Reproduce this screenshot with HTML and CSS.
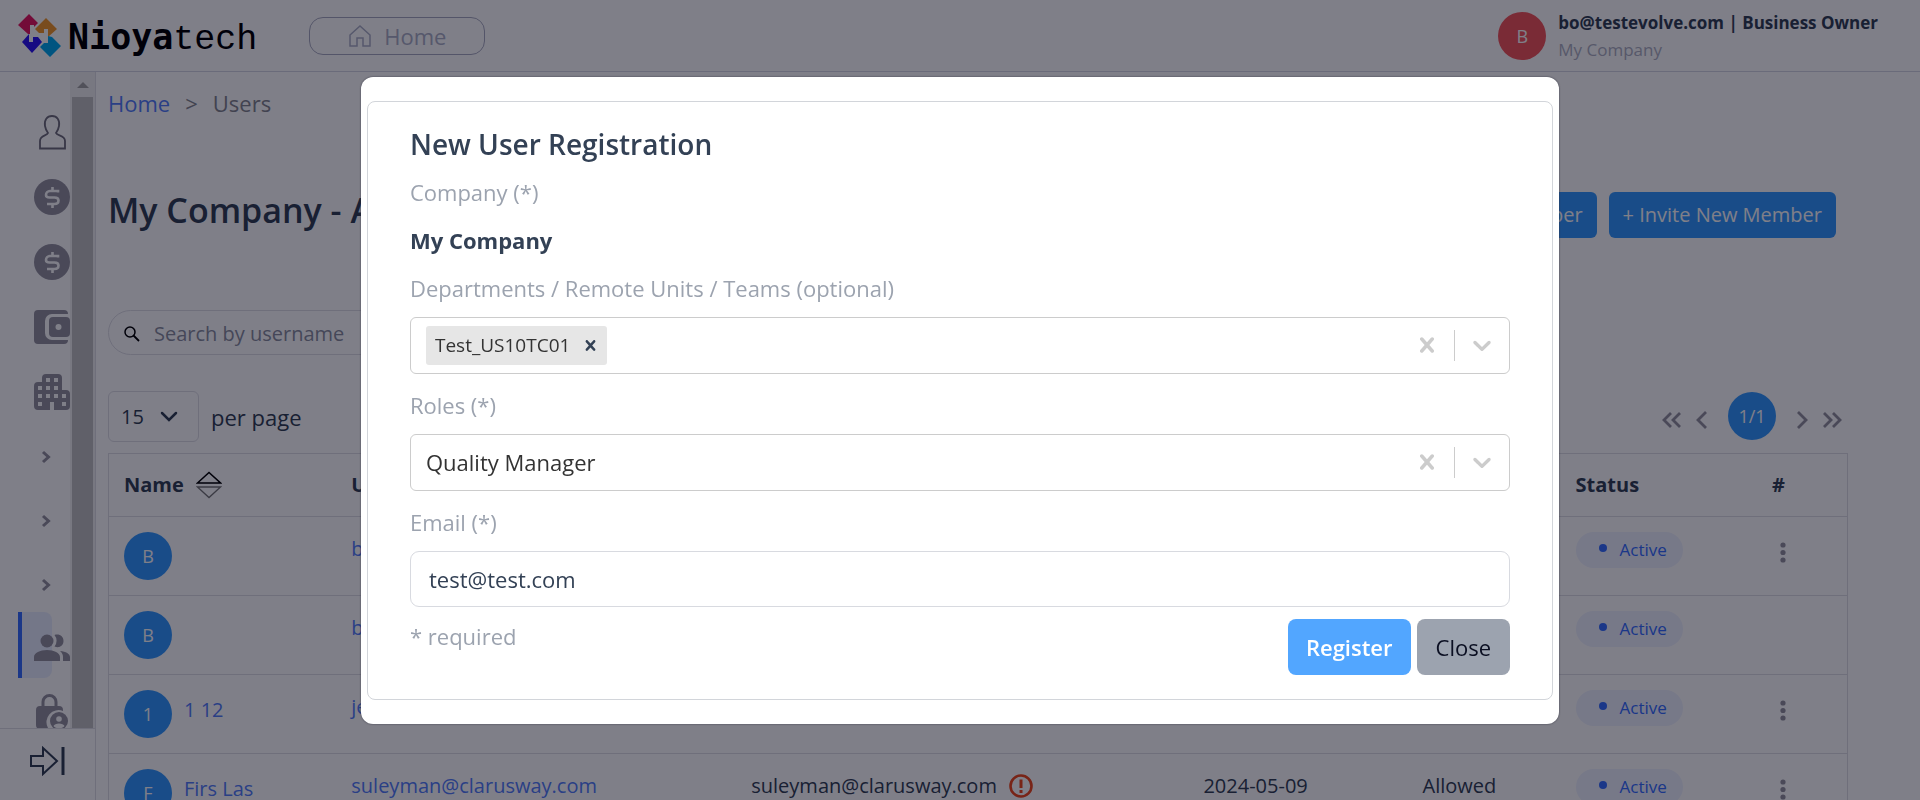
FILE: index.html
```html
<!DOCTYPE html>
<html lang="en">
<head>
<meta charset="utf-8">
<title>Nioyatech - Users</title>
<link rel="stylesheet" href="styles.css">
</head>
<body>
<svg width="0" height="0" class="sprite" aria-hidden="true">
  <symbol id="dollar" viewBox="0 0 36 36"><circle cx="18" cy="18" r="18" fill="currentColor"/><path d="M24 13.500V12H16a4 4 0 0 0-4 4c0 1.500 1.500 2.500 3.500 2.500h5c2.500 0 4 1 4 3S23 25 20.500 25H13M18.500 8v4M18.500 25v4" fill="none" stroke="#fff" stroke-width="2.600"/></symbol>
  <symbol id="chev-right" viewBox="0 0 10 14"><path d="M2 2l5.500 5L2 12" fill="none" stroke="currentColor" stroke-width="3"/></symbol>
  <symbol id="cross" viewBox="0 0 20 20"><path d="M14.348 14.849c-.469.469-1.229.469-1.697 0l-2.651-3.030-2.651 3.029c-.469.469-1.229.469-1.697 0-.469-.469-.469-1.229 0-1.697l2.758-3.150-2.759-3.152c-.469-.469-.469-1.228 0-1.697s1.228-.469 1.697 0l2.652 3.031 2.651-3.031c.469-.469 1.228-.469 1.697 0s.469 1.229 0 1.697l-2.758 3.152 2.758 3.150c.469.469.469 1.229 0 1.698z" fill="currentColor"/></symbol>
  <symbol id="chev-down" viewBox="0 0 20 20"><path d="M4.516 7.548c.436-.446 1.043-.481 1.576 0L10 11.295l3.908-3.747c.533-.481 1.141-.446 1.574 0 .436.445.408 1.197 0 1.615l-4.695 4.502a1.095 1.095 0 0 1-1.576 0S4.924 9.581 4.516 9.163c-.409-.418-.436-1.170 0-1.615z" fill="currentColor"/></symbol>
  <symbol id="dots" viewBox="0 0 6 22"><circle cx="3" cy="3" r="2.600" fill="currentColor"/><circle cx="3" cy="10.500" r="2.600" fill="currentColor"/><circle cx="3" cy="18" r="2.600" fill="currentColor"/></symbol>
</svg>

<div class="app">
  <header class="topbar">
    <a class="brand" href="#" aria-label="Nioyatech">
      <svg width="44" height="44" viewBox="0 0 44 44">
        <path d="M11 0l9 9-4 4v-2h-4v9h-2L0 11z" fill="#e6185f"/>
        <path d="M28 4l11 11-9 8v-8h-4v4h-5l-4-4z" fill="#f3982b"/>
        <path d="M4 28l7-8v8h4v-5l5 0 4 5-10 11z" fill="#2d16f2"/>
        <path d="M43 32L32 43 22 33l4-4h4v-7l4 1z" fill="#00a9ee"/>
      </svg>
      <span class="brand-text"><b>Nioya</b>tech</span>
    </a>
    <a class="home-btn" href="#">
      <svg width="24" height="24" viewBox="0 0 24 24"><path d="M2 11L12 2l10 9v11h-7v-8H9v8H2z" fill="none" stroke="currentColor" stroke-width="1.500"/></svg>
      Home
    </a>
    <div class="account">
      <span class="avatar avatar-red">B</span>
      <div class="account-text">
        <strong>bo@testevolve.com | Business Owner</strong>
        <span>My Company</span>
      </div>
    </div>
  </header>

  <div class="body">
    <aside class="sidebar">
      <div class="side-scroll">
        <nav class="side-nav">
          <a class="side-item" href="#" aria-label="Profile"><svg class="profile" width="36" height="36" viewBox="0 0 36 36"><path d="M18 2c5 0 8 4 7 10-.5 3-1.500 5-3 7 1 3 9 2 9 8v7.500H6V27c0-6 7-5 8-8-1.500-2-2.500-4-3-7-1-6 2-10 7-10z" fill="none" stroke="currentColor" stroke-width="1.800"/></svg></a>
          <a class="side-item" href="#" aria-label="Billing"><svg width="36" height="36"><use href="#dollar"/></svg></a>
          <a class="side-item" href="#" aria-label="Payments"><svg width="36" height="36"><use href="#dollar"/></svg></a>
          <a class="side-item" href="#" aria-label="Wallet"><svg width="36" height="36" viewBox="0 0 36 36"><path d="M4 1h26a4 4 0 0 1 4 4H18a7 7 0 0 0-7 7v12a7 7 0 0 0 7 7h16a4 4 0 0 1-4 4H4a4 4 0 0 1-4-4V5a4 4 0 0 1 4-4z" fill="currentColor"/><rect x="15" y="8" width="21" height="20" rx="4" fill="currentColor"/><circle cx="24.500" cy="18" r="3" fill="#fff"/></svg></a>
          <a class="side-item" href="#" aria-label="Company"><svg width="36" height="36" viewBox="0 0 36 36"><path fill-rule="evenodd" fill="currentColor" d="M12 0h12a4 4 0 0 1 4 4v12h4a4 4 0 0 1 4 4v12a4 4 0 0 1-4 4H20v-8h-4v8H4a4 4 0 0 1-4-4V12a4 4 0 0 1 4-4h4V4a4 4 0 0 1 4-4zM12 4v4h4V4zM20 4v4h4V4zM4 12v4h4v-4zM12 12v4h4v-4zM20 12v4h4v-4zM4 20v4h4v-4zM12 20v4h4v-4zM20 20v4h4v-4zM28 20v4h4v-4zM4 28v4h4v-4zM28 28v4h4v-4z"/></svg></a>
          <a class="side-item side-more" href="#" aria-label="Expand"><svg width="10" height="14"><use href="#chev-right"/></svg></a>
          <a class="side-item side-more" href="#" aria-label="Expand"><svg width="10" height="14"><use href="#chev-right"/></svg></a>
          <a class="side-item side-more" href="#" aria-label="Expand"><svg width="10" height="14"><use href="#chev-right"/></svg></a>
          <a class="side-item side-active" href="#" aria-label="Users"><svg width="36" height="28" viewBox="0 0 36 28"><g fill="currentColor"><circle cx="13" cy="7" r="6.500"/><path d="M0 27v-4c0-4 6-7 13-7s13 3 13 7v4zM29 27v-4c0-2.500-1-4.500-3-6 6 .5 10 3 10 6v4zM20.500 12.500a9 9 0 0 0 0-11.500c5-1.500 9 1.500 9 6s-4 7.500-9 5.500z"/></g></svg></a>
          <a class="side-item side-lock" href="#" aria-label="Permissions"><svg width="36" height="36" viewBox="0 0 36 36"><path d="M9 13V8a6.500 6.500 0 0 1 13 0v5" fill="none" stroke="currentColor" stroke-width="3"/><path d="M6 12h19a4 4 0 0 1 4 4v1a12 12 0 0 0-15 17v1H6a4 4 0 0 1-4-4V16a4 4 0 0 1 4-4z" fill="currentColor"/><circle cx="25" cy="27" r="9" fill="currentColor"/><circle cx="25" cy="25" r="2.800" fill="#fff"/><path d="M19.500 32c1-3.500 10-3.500 11 0-2 3-9 3-11 0z" fill="#fff"/></svg></a>
        </nav>
        <div class="scrollbar"><span class="scroll-up"></span><span class="scroll-thumb"></span></div>
      </div>
      <button class="side-toggle" type="button" aria-label="Expand sidebar"><svg width="36" height="30" viewBox="0 0 36 30"><path d="M1 10h12V2l14 13-14 13v-8H1z" fill="none" stroke="currentColor" stroke-width="2"/><path d="M33 1v28" stroke="currentColor" stroke-width="3"/></svg></button>
    </aside>

    <main class="content">
      <nav class="crumbs"><a href="#">Home</a><span class="crumb-sep">&gt;</span><span>Users</span></nav>
      <div class="title-row">
        <h1>My Company - All Users</h1>
        <div class="actions">
          <button type="button">+ Add New Member</button>
          <button type="button">+ Invite New Member</button>
        </div>
      </div>
      <label class="search">
        <svg width="16" height="16" viewBox="0 0 16 16"><circle cx="6" cy="6" r="5" fill="none" stroke="#000" stroke-width="1.500"/><path d="M9.500 9.500L15 15" stroke="#000" stroke-width="1.800"/></svg>
        <input type="text" placeholder="Search by username" aria-label="Search by username">
      </label>
      <div class="pager-row">
        <div class="per-page">
          <div class="size-box">
            <select id="page-size"><option>15</option></select>
            <svg width="18" height="12" viewBox="0 0 18 12"><path d="M2 2l7 7 7-7" fill="none" stroke="currentColor" stroke-width="2.500" stroke-linecap="round"/></svg>
          </div>
          <label for="page-size">per page</label>
        </div>
        <div class="pager">
          <button type="button" aria-label="First page"><svg width="20" height="18" viewBox="0 0 20 18"><path d="M9 2L2 9l7 7M18 2l-7 7 7 7" fill="none" stroke="currentColor" stroke-width="2.800"/></svg></button>
          <button type="button" aria-label="Previous page"><svg width="12" height="18" viewBox="0 0 12 18"><path d="M10 1L2 9l8 8" fill="none" stroke="currentColor" stroke-width="2.800"/></svg></button>
          <span class="avatar page-now">1/1</span>
          <button type="button" aria-label="Next page"><svg width="12" height="18" viewBox="0 0 12 18"><path d="M2 1l8 8-8 8" fill="none" stroke="currentColor" stroke-width="2.800"/></svg></button>
          <button type="button" aria-label="Last page"><svg width="20" height="18" viewBox="0 0 20 18"><path d="M2 2l7 7-7 7M11 2l7 7-7 7" fill="none" stroke="currentColor" stroke-width="2.800"/></svg></button>
        </div>
      </div>
      <table class="users">
        <colgroup><col class="c-name"><col class="c-user"><col class="c-mail"><col class="c-date"><col class="c-login"><col class="c-status"><col class="c-menu"></colgroup>
        <thead>
          <tr>
            <th><span class="sort">Name <svg width="26" height="28" viewBox="0 0 26 28"><path d="M1.500 12L13 1.500 24.500 12z" fill="none" stroke="#000" stroke-width="1.500"/><path d="M1.500 16L13 26.500 24.500 16z" fill="none" stroke="#777" stroke-width="1.300"/></svg></span></th>
            <th>Username</th><th></th><th></th><th></th><th>Status</th><th>#</th>
          </tr>
        </thead>
        <tbody>
          <tr>
            <td><span class="person"><span class="avatar">B</span></span></td>
            <td><a href="#">bo@testevolve.com</a></td><td></td><td></td><td></td>
            <td><span class="pill">Active</span></td>
            <td><button class="row-menu" type="button" aria-label="Row menu"><svg width="6" height="22"><use href="#dots"/></svg></button></td>
          </tr>
          <tr>
            <td><span class="person"><span class="avatar">B</span></span></td>
            <td><a href="#">bo@test.com</a></td><td></td><td></td><td></td>
            <td><span class="pill">Active</span></td>
            <td></td>
          </tr>
          <tr>
            <td><span class="person"><span class="avatar">1</span><a href="#">1 12</a></span></td>
            <td><a href="#">je@test.com</a></td><td></td><td></td><td></td>
            <td><span class="pill">Active</span></td>
            <td><button class="row-menu" type="button" aria-label="Row menu"><svg width="6" height="22"><use href="#dots"/></svg></button></td>
          </tr>
          <tr>
            <td><span class="person"><span class="avatar">F</span><a href="#">Firs Las</a></span></td>
            <td><a href="#">suleyman@clarusway.com</a></td>
            <td><span class="mail">suleyman@clarusway.com <svg width="24" height="24" viewBox="0 0 24 24"><circle cx="12" cy="12" r="10.500" fill="none" stroke="#f0481c" stroke-width="2.600"/><path d="M12 5.500v8.500M12 16v3" stroke="#f0481c" stroke-width="3"/></svg></span></td>
            <td>2024-05-09</td><td>Allowed</td>
            <td><span class="pill">Active</span></td>
            <td><button class="row-menu" type="button" aria-label="Row menu"><svg width="6" height="22"><use href="#dots"/></svg></button></td>
          </tr>
        </tbody>
      </table>
    </main>
  </div>
</div>

<div class="overlay">
  <div class="modal" role="dialog" aria-labelledby="modal-title">
    <form class="form">
      <h2 id="modal-title">New User Registration</h2>
      <p class="caption">Company (*)</p>
      <p class="company">My Company</p>
      <div class="field">
        <label for="teams">Departments / Remote Units / Teams (optional)</label>
        <div class="combo">
          <span class="chip">Test_US10TC01 <button type="button" aria-label="Remove Test_US10TC01"><svg width="21" height="21"><use href="#cross"/></svg></button></span>
          <input id="teams" type="text">
          <button type="button" aria-label="Clear teams"><svg width="30" height="30"><use href="#cross"/></svg></button>
          <span class="divider"></span>
          <button type="button" aria-label="Open teams"><svg width="30" height="30"><use href="#chev-down"/></svg></button>
        </div>
      </div>
      <div class="field">
        <label for="roles">Roles (*)</label>
        <div class="combo">
          <select id="roles"><option>Quality Manager</option></select>
          <button type="button" aria-label="Clear role"><svg width="30" height="30"><use href="#cross"/></svg></button>
          <span class="divider"></span>
          <button type="button" aria-label="Open roles"><svg width="30" height="30"><use href="#chev-down"/></svg></button>
        </div>
      </div>
      <div class="field">
        <label for="email">Email (*)</label>
        <input id="email" class="text-input" type="email" value="test@test.com">
      </div>
      <div class="form-foot">
        <p class="caption">* required</p>
        <div class="buttons">
          <button class="btn btn-primary" type="submit">Register</button>
          <button class="btn btn-close" type="button">Close</button>
        </div>
      </div>
    </form>
  </div>
</div>
</body>
</html>
```

FILE: styles.css
```css
* { box-sizing: border-box; }
body {
  margin: 0;
  font: 22px/34px "Open Sans", "Noto Sans", sans-serif;
  color: #334155;
  background: #fff;
  overflow: hidden;
}
h1, h2, p { margin: 0; }
a { color: #547ef9; text-decoration: none; }
button { font: inherit; color: inherit; border: 0; background: none; padding: 0; }
input, select { font: inherit; color: inherit; border: 0; background: none; padding: 0; outline: 0; appearance: none; min-width: 0; }
svg { display: block; flex: none; }
.sprite { position: absolute; }

.app { height: 100vh; display: flex; flex-direction: column; overflow: hidden; }

/* Top bar */
.topbar { flex: none; display: flex; align-items: center; height: 72px; padding: 0 42px 0 18px; border-bottom: 1px solid #d5d6e2; }
.brand { display: flex; align-items: center; gap: 6px; color: #000; }
.brand-text { padding-top: 6px; font: 35px/44px "Liberation Mono", monospace; }
.brand-text b { font-family: "DejaVu Sans Mono", monospace; }
.home-btn { display: flex; align-items: center; justify-content: center; gap: 12px; width: 176px; height: 38px; margin-left: 52px; border: 1px solid #a9abc0; border-radius: 14px; color: #acb0c6; }
.account { display: flex; align-items: center; gap: 12px; margin-left: auto; }
.account-text { display: flex; flex-direction: column; font-size: 17px; line-height: 27px; }
.account-text span { color: #aeb1c2; }
.avatar { display: flex; align-items: center; justify-content: center; flex: none; width: 48px; height: 48px; border-radius: 50%; background: #3399ff; color: #fff; font-size: 18px; }
.avatar-red { background: #f4565b; }

/* Sidebar */
.body { flex: 1; min-height: 0; display: flex; }
.sidebar { flex: none; width: 96px; display: flex; flex-direction: column; border-right: 1px solid #dedee5; color: #94929f; }
.side-scroll { flex: 1; min-height: 0; display: flex; overflow: hidden; }
.side-nav { width: 70px; padding-top: 27px; overflow: hidden; }
.side-item { display: flex; align-items: center; height: 65px; padding-left: 34px; color: inherit; }
.profile { color: #706e7c; }
.side-more { height: 64px; padding: 2px 0 0 41px; }
.side-active { height: 66px; width: 34px; margin: -4px 0 0 18px; padding-left: 12px; padding-top: 6px; border-left: 4px solid #366eff; border-radius: 0 8px 8px 0; background: #e9eeff; }
.side-lock { align-items: flex-start; padding-top: 16px; }
.scrollbar { flex: 1; display: flex; flex-direction: column; align-items: center; background: #f1f1f1; }
.scroll-up { margin: 10px 0 9px; border: 6px solid transparent; border-top-width: 0; border-bottom-color: #a3a3a3; }
.scroll-thumb { flex: 1; width: 21px; background: #c1c1c1; }
.side-toggle { display: flex; align-items: center; height: 72px; padding: 0 0 8px 30px; border-top: 1px solid #dedee5; color: #334155; }

/* Content */
.content { flex: 1; min-width: 0; padding: 14px 72px 0 12px; }
.crumbs { display: flex; color: #85868f; }
.crumb-sep { margin: 0 15px; }
.title-row { display: flex; justify-content: space-between; margin-top: 72px; padding-right: 12px; }
h1 { font-size: 34px; line-height: 36px; font-weight: 600; }
.actions { display: flex; gap: 12px; }
.actions button { height: 46px; padding: 0 14px; border-radius: 6px; background: #3399ff; color: #fff; font-size: 20px; }
.search { display: flex; align-items: center; gap: 14px; width: 400px; height: 45px; margin-top: 72px; padding: 2px 15px 0; border: 1px solid #dedee5; border-radius: 23px; }
.search input { flex: 1; font-size: 20px; }
.search input::placeholder { color: #8b8f9f; opacity: 1; }
.pager-row { display: flex; justify-content: space-between; margin-top: 36px; }
.per-page { display: flex; align-items: center; gap: 12px; }
.size-box { display: flex; align-items: center; gap: 9px; height: 51px; width: 91px; padding: 0 12px; border: 1px solid #dedee5; border-radius: 6px; }
.size-box select { width: 30px; font-size: 20px; }
.pager { display: flex; align-items: center; gap: 14px; height: 48px; margin-top: 1px; padding-right: 6px; color: #94929f; }
.pager button { padding-top: 8px; }
.page-now { margin: 0 6px; }

/* Users table */
.users { width: 100%; margin-top: 11px; table-layout: fixed; border-collapse: collapse; border: 1px solid #dedee5; font-size: 20px; }
.c-name { width: 13.1%; }
.c-user { width: 23%; }
.c-mail { width: 26%; }
.c-date { width: 12.6%; }
.c-login { width: 8.8%; }
.c-status { width: 11.3%; }
.c-menu { width: 5.2%; }
.users th { height: 63px; padding: 0 15px; text-align: left; font-weight: 700; border-bottom: 1px solid #dedee5; }
.users td { height: 79px; padding: 15px 15px 0; vertical-align: top; white-space: nowrap; border-bottom: 1px solid #dedee5; }
.sort, .person, .mail { display: flex; align-items: center; gap: 12px; }
.person > a { padding-bottom: 8px; }
.pill { display: flex; align-items: center; gap: 13px; width: 107px; height: 36px; padding-left: 23px; border-radius: 18px; background: #eef2ff; color: #366eff; font-size: 17px; font-weight: 500; }
.pill::before { content: ""; width: 8px; height: 8px; margin-bottom: 4px; border-radius: 50%; background: #366eff; }
.row-menu { display: block; padding: 10px 0 0 8px; color: #94929f; }

/* Registration dialog */
.overlay { position: fixed; inset: 0; display: flex; align-items: center; justify-content: center; background: rgba(0, 0, 17, 0.5); }
.modal { width: 62.4%; padding: 24px 6px; border-radius: 12px; background: #fff; box-shadow: 0 0 2px #334; }
.form { display: flex; flex-direction: column; gap: 14px; padding: 25px 42px 24px; border: 1px solid #d2d5da; border-radius: 8px; }
h2 { font-size: 28px; line-height: 34px; font-weight: 600; }
.caption, .field label { color: #9ca3af; }
.company { font-weight: 700; }
.field { display: flex; flex-direction: column; gap: 12px; }
.combo { display: flex; align-items: center; height: 57px; padding: 0 12px 0 15px; border: 1px solid #ccc; border-radius: 6px; color: #ccc; }
.combo input, .combo select { flex: 1; color: #333; }
.combo select { height: 55px; }
.chip { display: flex; align-items: center; gap: 10px; height: 39px; padding: 0 6px 0 9px; border-radius: 3px; background: #e6e6e6; color: #333; font-size: 19px; }
.chip button { color: #334155; }
.divider { width: 1px; height: 31px; margin: 0 12px; background: #ccc; }
.text-input { height: 56px; padding: 0 18px; border: 1px solid #d8dae0; border-radius: 9px; }
.form-foot { display: flex; justify-content: space-between; margin-top: -2px; }
.buttons { display: flex; gap: 6px; }
.btn { height: 56px; border-radius: 8px; }
.btn-primary { padding: 0 18px; background: #52a6ff; color: #fff; font-weight: 600; }
.btn-close { padding: 0 19px; background: #9ca3af; color: #0b0f22; }
```
